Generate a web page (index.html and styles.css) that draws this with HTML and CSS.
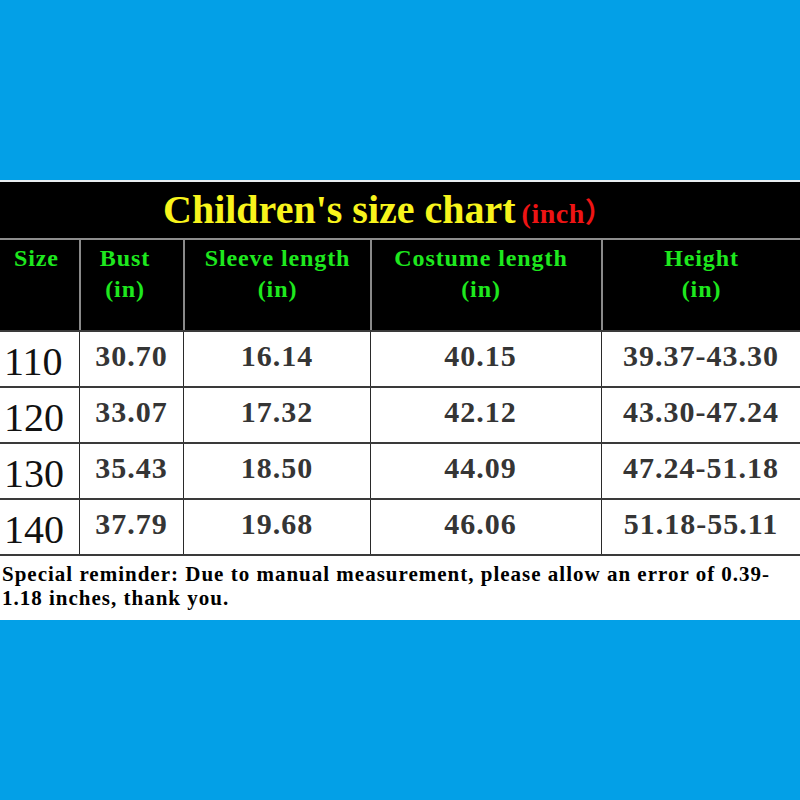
FILE: index.html
```html
<!DOCTYPE html>
<html lang="en">
<head>
<meta charset="utf-8">
<title>Children's size chart</title>
<link rel="stylesheet" href="styles.css">
</head>
<body>
<div class="page">
  <div class="band-top"></div>
  <section class="chart">
    <div class="title"><span class="title-main">Children's size chart</span><span class="title-unit">(inch）</span></div>
    <div class="row head">
      <div class="cell c1">Size</div>
      <div class="cell c2">Bust<br>(in)</div>
      <div class="cell c3">Sleeve length<br>(in)</div>
      <div class="cell c4">Costume length<br>(in)</div>
      <div class="cell c5">Height<br>(in)</div>
    </div>
    <div class="row data">
      <div class="cell c1">110</div>
      <div class="cell c2">30.70</div>
      <div class="cell c3">16.14</div>
      <div class="cell c4">40.15</div>
      <div class="cell c5">39.37-43.30</div>
    </div>
    <div class="row data">
      <div class="cell c1">120</div>
      <div class="cell c2">33.07</div>
      <div class="cell c3">17.32</div>
      <div class="cell c4">42.12</div>
      <div class="cell c5">43.30-47.24</div>
    </div>
    <div class="row data">
      <div class="cell c1">130</div>
      <div class="cell c2">35.43</div>
      <div class="cell c3">18.50</div>
      <div class="cell c4">44.09</div>
      <div class="cell c5">47.24-51.18</div>
    </div>
    <div class="row data last">
      <div class="cell c1">140</div>
      <div class="cell c2">37.79</div>
      <div class="cell c3">19.68</div>
      <div class="cell c4">46.06</div>
      <div class="cell c5">51.18-55.11</div>
    </div>
    <p class="note">Special reminder: Due to manual measurement, please allow an error of 0.39-<br>1.18 inches, thank you.</p>
  </section>
</div>
</body>
</html>
```

FILE: styles.css
```css
* { box-sizing: border-box; }

html, body {
  margin: 0;
  padding: 0;
}

body {
  background: #03a0e7;
  width: 800px;
  height: 800px;
  overflow: hidden;
  font-family: "Liberation Serif", "Times New Roman", "Noto Sans CJK SC", serif;
}

.band-top {
  height: 180px;
}

.chart {
  border-top: 2px solid #e9eef0;
  background: #fff;
}

.title {
  background: #000;
  height: 56px;
  line-height: 56px;
  padding-left: 163px;
  white-space: nowrap;
  font-weight: bold;
}

.title-main {
  color: #f8f41c;
  font-size: 40px;
}

.title-unit {
  color: #ee1414;
  font-size: 28px;
  letter-spacing: 0.5px;
  margin-left: 6px;
}

.row {
  display: grid;
  grid-template-columns: 79px 104px 187px 231px 1fr;
}

.cell {
  text-align: center;
  white-space: nowrap;
}

.row .cell + .cell {
  border-left: 1px solid #2a2a2a;
}

.head {
  background: #000;
  border-top: 2px solid #8d8d8d;
  height: 92px;
}

.head .cell {
  color: #1ee81e;
  font-weight: bold;
  font-size: 24px;
  line-height: 31px;
  letter-spacing: 0.9px;
  padding-top: 3px;
}

.head .cell + .cell {
  border-left: 2px solid #8a8a8a;
}

.head .c1 {
  text-align: left;
  padding-left: 14px;
}

.head .c2 {
  padding-right: 14px;
}

.head .c4,
.data .c4 {
  padding-right: 11px;
}

.data {
  border-top: 2px solid #3a3a3a;
  height: 56px;
}

.data.last {
  border-bottom: 2px solid #3a3a3a;
  height: 58px;
}

.data .cell {
  color: #353535;
  font-weight: bold;
  font-size: 30px;
  line-height: 30px;
  letter-spacing: 1px;
  padding-top: 9px;
}

.data .c1 {
  color: #111;
  font-weight: normal;
  font-size: 40px;
  line-height: 40px;
  letter-spacing: 0;
  text-align: left;
  padding-left: 4px;
  padding-top: 10px;
}

.note {
  margin: 0;
  height: 64px;
  padding: 6px 0 0 2px;
  font-size: 21px;
  line-height: 24px;
  letter-spacing: 1px;
  font-weight: bold;
  color: #000;
  white-space: nowrap;
}
```
